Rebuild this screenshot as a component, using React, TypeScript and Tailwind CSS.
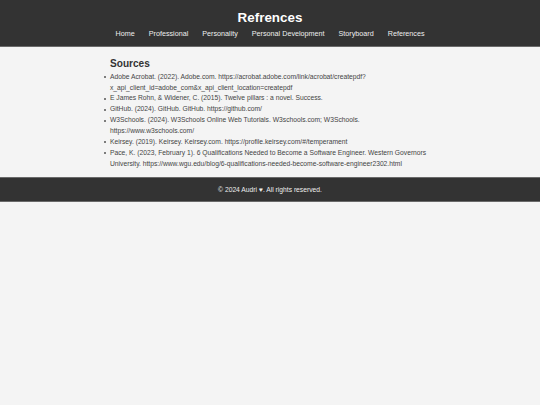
export default function App() {
  const links = ["Home", "Professional", "Personality", "Personal Development", "Storyboard", "References"];
  const sources = [
    "Adobe Acrobat. (2022). Adobe.com. https://acrobat.adobe.com/link/acrobat/createpdf?x_api_client_id=adobe_com&x_api_client_location=createpdf",
    "E James Rohn, & Widener, C. (2015). Twelve pillars : a novel. Success.",
    "GitHub. (2024). GitHub. GitHub. https://github.com/",
    "W3Schools. (2024). W3Schools Online Web Tutorials. W3schools.com; W3Schools. https://www.w3schools.com/",
    "Keirsey. (2019). Keirsey. Keirsey.com. https://profile.keirsey.com/#/temperament",
    "Pace, K. (2023, February 1). 6 Qualifications Needed to Become a Software Engineer. Western Governors University. https://www.wgu.edu/blog/6-qualifications-needed-become-software-engineer2302.html",
  ];

  return (
    <div className="min-h-[405px] bg-[#f4f4f4] font-['Liberation_Sans',Arial,sans-serif] text-[#333]">
      {/* header */}
      <header className="bg-[#333] text-white text-center pt-[10px] pb-[6px] border-b border-[#6a6a6a]">
        <h1 className="text-[13.4px] leading-[15px] font-bold">Refrences</h1>
        <nav className="mt-[4px] flex justify-center gap-[14px] text-[7.2px] leading-[10.8px] text-[#eee]">
          {links.map((l) => (
            <a key={l}>{l}</a>
          ))}
        </nav>
      </header>

      {/* sources list */}
      <main className="w-[320px] mx-auto pt-[10px] pb-[8px]">
        <h2 className="text-[10.1px] leading-[13px] font-bold text-[#333] mb-[2px]">Sources</h2>
        <ul className="-ml-[6px] text-[6.72px] leading-[10.85px] text-[#444] break-words">
          {sources.map((s) => (
            <li key={s} className="flex">
              <span className="w-[6px] shrink-0 pt-[4.5px]">
                <span className="block w-[2px] h-[2px] rounded-full bg-[#555]" />
              </span>
              <span>{s}</span>
            </li>
          ))}
        </ul>
      </main>

      {/* footer */}
      <footer className="bg-[#333] text-[#eee] text-center text-[6.72px] leading-[10px] py-[6.5px] border-y border-[#6a6a6a]">
        © 2024 Audri ♥. All rights reserved.
      </footer>
    </div>
  );
}
